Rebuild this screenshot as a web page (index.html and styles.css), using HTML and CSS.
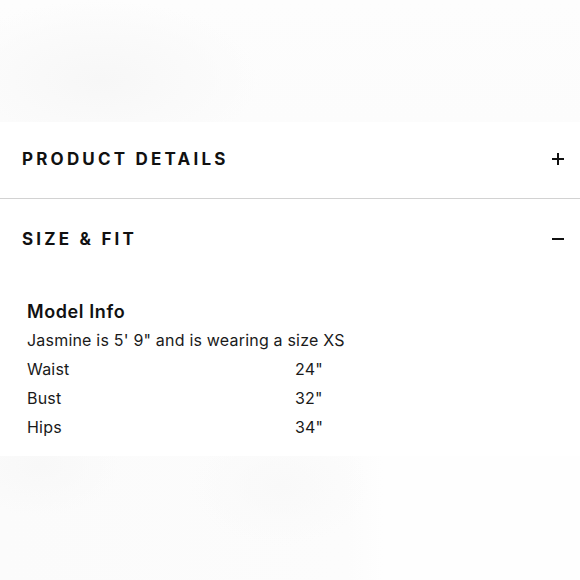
FILE: index.html
```html
<!DOCTYPE html>
<html lang="en">
<head>
<meta charset="utf-8">
<title>Size &amp; Fit</title>
<link rel="stylesheet" href="styles.css">
</head>
<body>
<div class="backdrop-top"></div>
<section class="panel">
  <div class="acc-header acc-first">
    <h2 class="acc-title">PRODUCT DETAILS</h2>
    <svg class="acc-icon" width="12" height="12" viewBox="0 0 12 12" aria-hidden="true">
      <path d="M0 6H12M6 0V12" stroke="#111" stroke-width="2" fill="none"/>
    </svg>
  </div>
  <div class="acc-header acc-second">
    <h2 class="acc-title">SIZE &amp; FIT</h2>
    <svg class="acc-icon" width="12" height="12" viewBox="0 0 12 12" aria-hidden="true">
      <path d="M0 6H12" stroke="#111" stroke-width="2" fill="none"/>
    </svg>
  </div>
  <div class="acc-body">
    <h3 class="model-title">Model Info</h3>
    <p class="model-line">Jasmine is 5' 9" and is wearing a size XS</p>
    <div class="measure-grid">
      <span>Waist</span><span>24"</span>
      <span>Bust</span><span>32"</span>
      <span>Hips</span><span>34"</span>
    </div>
  </div>
</section>
<div class="backdrop-bottom"></div>
</body>
</html>
```
FILE: styles.css
```css
html, body {
  margin: 0;
  padding: 0;
}
body {
  width: 580px;
  height: 580px;
  overflow: hidden;
  background: #fdfdfd;
  font-family: Inter, "Open Sans", "Liberation Sans", sans-serif;
  color: #111;
}
.backdrop-top {
  height: 122px;
  background:
    radial-gradient(ellipse 160px 80px at 100px 80px, #f7f7f7 0%, #fafafa 55%, rgba(252,252,252,0) 100%),
    linear-gradient(#fdfdfd, #fcfcfc);
}
.panel {
  background: #fff;
  height: 334px;
  display: flex;
  flex-direction: column;
}
.acc-header {
  display: flex;
  align-items: center;
  justify-content: space-between;
  padding: 0 16px 0 22px;
}
.acc-first {
  height: 74px;
  padding-bottom: 2px;
  border-bottom: 1px solid #d2d2d2;
}
.acc-second {
  height: 80px;
}
.acc-title {
  margin: 0;
  font-size: 17px;
  font-weight: 700;
  letter-spacing: 3.2px;
  line-height: 1;
}
.acc-icon {
  display: block;
}
.acc-body {
  padding: 19px 0 0 27px;
}
.model-title {
  margin: 0;
  font-size: 18px;
  font-weight: 600;
  letter-spacing: 0.6px;
  line-height: 28px;
}
.model-line {
  margin: 0;
  font-size: 16px;
  letter-spacing: 0.2px;
  line-height: 29px;
  color: #1a1a1a;
}
.measure-grid {
  display: grid;
  grid-template-columns: 268px auto;
  font-size: 16px;
  letter-spacing: 0.2px;
  line-height: 29px;
  color: #1a1a1a;
}
.backdrop-bottom {
  height: 124px;
  background:
    radial-gradient(ellipse 80px 50px at 40px 10px, #f8f8f8 0%, rgba(250,250,250,0) 100%),
    radial-gradient(ellipse 90px 60px at 280px 30px, #f9f9f9 0%, rgba(250,250,250,0) 100%),
    linear-gradient(90deg, #fbfbfb 0%, #fcfcfc 60%, #fefefe 66%, #fefefe 100%);
}
```
